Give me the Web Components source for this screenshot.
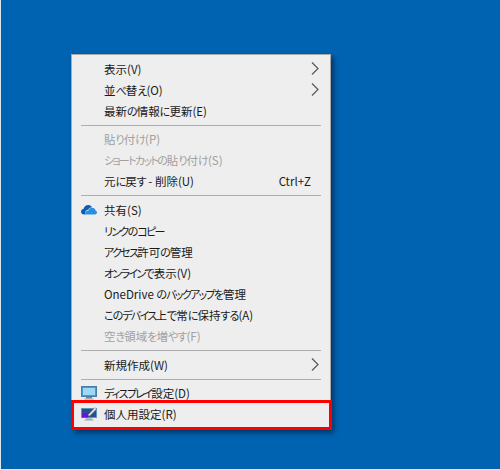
<!DOCTYPE html>
<html lang="ja">
<head>
<meta charset="utf-8">
<style>
  html, body { margin: 0; padding: 0; }
  body { width: 500px; height: 470px; overflow: hidden; background: #0063b1; }
</style>
</head>
<body>
<desktop-view>
  <context-menu>
    <menu-row arrow>表示(V)</menu-row>
    <menu-row arrow>並べ替え(O)</menu-row>
    <menu-row>最新の情報に更新(E)</menu-row>
    <menu-sep></menu-sep>
    <menu-row disabled>貼り付け(P)</menu-row>
    <menu-row disabled>ショートカットの貼り付け(S)</menu-row>
    <menu-row shortcut="Ctrl+Z">元に戻す - 削除(U)</menu-row>
    <menu-sep wide></menu-sep>
    <menu-row>
      <svg slot="icon" width="16" height="11" viewBox="0 0 18 12">
        <path fill="#0a5fb4" d="M3.500 11.500C1.400 11.500 0 10.200 0 8.500 0 6.900 1.200 5.700 2.800 5.500 3.300 3 5.400 1 8 1c1.900 0 3.500 1 4.400 2.600-1.900.1-3.500 1.200-4.200 2.800C6.400 6.300 4.900 7.600 4.900 9.400c0 .8.2 1.500.7 2.100z"/>
        <path fill="#2a8fe0" d="M6 11.500c-.6-.5-.9-1.200-.9-2 0-1.500 1.300-2.600 3.400-2.500C9 5.200 10.600 4 12.500 4c2.200 0 3.900 1.500 4.100 3.500C17.500 7.800 18 8.600 18 9.500c0 1.200-1 2-2.300 2z"/>
      </svg>
      共有(S)
    </menu-row>
    <menu-row>リンクのコピー</menu-row>
    <menu-row>アクセス許可の管理</menu-row>
    <menu-row>オンラインで表示(V)</menu-row>
    <menu-row>OneDrive のバックアップを管理</menu-row>
    <menu-row>このデバイス上で常に保持する(A)</menu-row>
    <menu-row disabled>空き領域を増やす(F)</menu-row>
    <menu-sep wide></menu-sep>
    <menu-row arrow>新規作成(W)</menu-row>
    <menu-sep></menu-sep>
    <menu-row>
      <svg slot="icon" width="16" height="15" viewBox="0 0 16 15">
        <rect x=".5" y="1.500" width="15" height="10" fill="#3f9fdc" stroke="#4a7da6"/>
        <rect x="2" y="3" width="12" height="7" fill="#9fd8f5"/>
        <rect x="5" y="12" width="6" height="1.500" fill="#6d8aa3"/>
        <rect x="3.500" y="13.500" width="9" height="1" fill="#8fa4b5"/>
      </svg>
      ディスプレイ設定(D)
    </menu-row>
    <menu-row>
      <svg slot="icon" width="16" height="15" viewBox="0 0 16 15">
        <rect x=".5" y="2.500" width="15" height="9" fill="#2b4f8a" stroke="#5f93c4"/>
        <rect x="1" y="7" width="6" height="4.500" fill="#6a10e0"/>
        <path d="M7 9 14 1.500 15.500 3 8.500 10z" fill="#e4eaef" stroke="#7d8b98" stroke-width=".5"/>
        <rect x="5" y="12.500" width="6" height="1" fill="#6d8aa3"/>
        <rect x="3.500" y="13.500" width="9" height="1" fill="#8fa4b5"/>
      </svg>
      個人用設定(R)
    </menu-row>
  </context-menu>
</desktop-view>
<script>
class DesktopView extends HTMLElement {
  constructor() {
    super();
    const shadow = this.attachShadow({ mode: "open" });
    shadow.innerHTML = `
      <style>
        :host {
          display: block;
          box-sizing: border-box;
          width: 500px;
          height: 470px;
          padding: 54px 0 0 70px;
          background: #0063b1;
          border-left: 1px solid #dfe6ee;
          border-bottom: 1px solid #dfe6ee;
        }
      </style>
      <slot></slot>
    `;
  }
}

class ContextMenu extends HTMLElement {
  constructor() {
    super();
    const shadow = this.attachShadow({ mode: "open" });
    shadow.innerHTML = `
      <style>
        :host {
          display: block;
          position: relative;
          box-sizing: border-box;
          width: 260px;
          height: 376px;
          padding: 3px 1px;
          background: #eeeeee;
          border: 1px solid #a9a9a9;
          box-shadow: 3px 3px 5px rgba(0, 20, 50, .55);
          font-family: "Noto Sans CJK JP", "Liberation Sans", sans-serif;
          font-size: 11.5px;
          font-feature-settings: "palt";
          color: #1a1a1a;
        }
        .mark {
          position: absolute;
          left: -1px;
          right: -2px;
          bottom: -1px;
          height: 30px;
          box-sizing: border-box;
          border: 3px solid #ff0000;
          pointer-events: none;
        }
      </style>
      <slot></slot>
      <div class="mark"></div>
    `;
  }
}

class MenuRow extends HTMLElement {
  constructor() {
    super();
    const shadow = this.attachShadow({ mode: "open" });
    shadow.innerHTML = `
      <style>
        :host {
          display: flex;
          align-items: center;
          height: 21px;
          white-space: nowrap;
        }
        :host([disabled]) { color: #a0a0a0; }
        .icon {
          flex: none;
          width: 31px;
          display: flex;
          justify-content: center;
          box-sizing: border-box;
          padding-left: 1px;
        }
        .label { flex: 1; }
        .shortcut { margin-right: 18px; }
        .label span.hira { letter-spacing: -.9px; font-size: 11px; }
        .label span.kata { letter-spacing: -1.7px; font-size: 11px; }
        svg.arrow { margin-right: 10px; display: none; }
        :host([arrow]) svg.arrow { display: block; }
      </style>
      <span class="icon"><slot name="icon"></slot></span>
      <span class="label"></span>
      <span class="shortcut"></span>
      <svg class="arrow" width="8" height="13" viewBox="0 0 8 13">
        <path d="M1 .5 7 6.500 1 12.500" fill="none" stroke="#5b5560" stroke-width="1.200"/>
      </svg>
    `;
  }

  connectedCallback() {
    this.shadowRoot.querySelector(".shortcut").textContent = this.getAttribute("shortcut") || "";
    // the original UI font has narrow kana, so kana runs get tighter spacing
    const text = [...this.childNodes]
      .filter((n) => n.nodeType === Node.TEXT_NODE)
      .map((n) => n.textContent)
      .join("")
      .trim();
    const label = this.shadowRoot.querySelector(".label");
    for (const run of text.match(/[\u3041-\u309f]+|[\u30a0-\u30ff]+|[^\u3041-\u30ff]+/g) || []) {
      const span = document.createElement("span");
      if (/[\u3041-\u309f]/.test(run)) span.className = "hira";
      if (/[\u30a0-\u30ff]/.test(run)) span.className = "kata";
      span.textContent = run;
      label.appendChild(span);
    }
  }
}

class MenuSep extends HTMLElement {
  constructor() {
    super();
    const shadow = this.attachShadow({ mode: "open" });
    shadow.innerHTML = `
      <style>
        :host { display: block; height: 7px; padding: 4px 8px 0; box-sizing: border-box; }
        :host([wide]) { height: 8px; }
        div { height: 1px; background: #adadad; }
      </style>
      <div></div>
    `;
  }
}

customElements.define("desktop-view", DesktopView);
customElements.define("context-menu", ContextMenu);
customElements.define("menu-row", MenuRow);
customElements.define("menu-sep", MenuSep);
</script>
</body>
</html>
